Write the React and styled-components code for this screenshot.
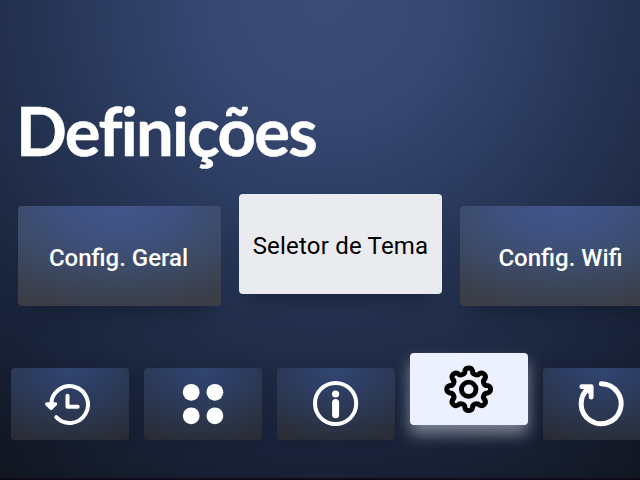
import React from "react";
import styled, { createGlobalStyle, css } from "styled-components";

const GlobalStyle = createGlobalStyle`
  * { box-sizing: border-box; }
  body { margin: 0; overflow: hidden; background: #10131f; }
`;

const Screen = styled.main`
  width: 640px;
  height: 480px;
  overflow: hidden;
  display: flex;
  flex-direction: column;
  border-bottom: 2px solid #0e0c1b;
  font-family: Roboto, sans-serif;
  background: radial-gradient(
    circle at 51% 0,
    #3a4b77 0,
    #374972 110px,
    #2f4067 190px,
    #273657 270px,
    #212d49 350px,
    #19233a 450px,
    #111621 570px
  );
`;

const Title = styled.h1`
  margin: 90px 0 0 16px;
  height: 80px;
  font: 700 67px/80px Lato, sans-serif;
  letter-spacing: -1.7px;
  -webkit-text-stroke: 0.5px #fff;
  color: #fff;
  white-space: nowrap;
`;

const CardRow = styled.section`
  display: flex;
  gap: 18px;
  margin: 36px 0 0 18px;
`;

const Card = styled.button`
  flex: 0 0 203px;
  height: 100px;
  padding: 4px 2px 0 0;
  border: 0;
  border-radius: 4px;
  display: flex;
  align-items: center;
  justify-content: center;
  font: 500 24px/30px Roboto, sans-serif;
  white-space: nowrap;
  color: #fff;
  background: radial-gradient(ellipse 92% 105% at 50% 0, #43558a 0, #3f5180 30%, #3c4b68 60%, #3b4457 80%, #3b3e47 100%);
  box-shadow: 0 18px 18px -12px rgba(16, 22, 35, 0.5);
  ${({ $active }) =>
    $active &&
    css`
      margin-top: -12px;
      margin-bottom: 12px;
      padding-right: 0;
      font-weight: 450;
      letter-spacing: 0.2px;
      color: #000;
      background: #e9ebef;
    `}
`;

const Dock = styled.nav`
  display: flex;
  gap: 15px;
  margin: 62px 0 0 11px;
`;

const DockButton = styled.button`
  flex: 0 0 118px;
  height: 72px;
  padding: 0;
  border: 0;
  border-radius: 4px;
  display: flex;
  align-items: center;
  justify-content: center;
  color: #fff;
  background: radial-gradient(ellipse 95% 110% at 50% 0, #314673 0, #2d3d61 34%, #2b364d 65%, #292c34 100%);
  box-shadow: 0 2px 12px rgba(16, 22, 35, 0.25);
  ${({ $active }) =>
    $active &&
    css`
      margin-top: -15px;
      margin-bottom: 15px;
      color: #000;
      background: #ebf1ff;
      box-shadow: 0 9px 15px rgba(235, 238, 245, 0.48);
    `}
`;

const Glyph = styled.svg`
  display: block;
  width: 60px;
  height: 60px;
  fill: none;
  stroke: currentColor;
  stroke-width: 4;
  stroke-linecap: round;
  stroke-linejoin: round;
`;

function gearOutline(teeth, radius, bend) {
  const step = Math.PI / teeth;
  const point = (i) => {
    const a = (i - 0.5) * step - Math.PI / 2;
    return `${(30 + radius * Math.cos(a)).toFixed(2)} ${(30 + radius * Math.sin(a)).toFixed(2)}`;
  };
  let d = `M${point(0)}`;
  for (let i = 1; i <= teeth * 2; i += 1) {
    d += `A${bend} ${bend} 0 0 ${i % 2} ${point(i)}`;
  }
  return `${d}Z`;
}

const HistoryIcon = () => (
  <Glyph viewBox="0 0 60 60">
    <path d="M11.2 30A18.4 18.4 0 1 1 16.2 43.2" />
    <path d="M6.8 30H15.4L11.1 34.2Z" fill="currentColor" strokeWidth="3.6" />
    <path d="M27.5 21.8V32.7H37.7" />
  </Glyph>
);

const AppsIcon = () => (
  <Glyph viewBox="0 0 60 60">
    <g fill="currentColor" stroke="none">
      <circle cx="18.2" cy="18.3" r="8.4" />
      <circle cx="41.9" cy="18.3" r="8.4" />
      <circle cx="18.2" cy="41.8" r="8.4" />
      <circle cx="41.9" cy="41.8" r="8.4" />
    </g>
  </Glyph>
);

const InfoIcon = () => (
  <Glyph viewBox="0 0 60 60">
    <circle cx="29.6" cy="29.5" r="20.6" />
    <circle cx="29.6" cy="20" r="3.6" fill="currentColor" stroke="none" />
    <path d="M29.6 28.4V40.8" strokeWidth="7" />
  </Glyph>
);

const GearIcon = () => (
  <Glyph viewBox="0 0 60 60">
    <g transform="translate(-0.3 1.1) scale(1 0.975)">
      <path d={gearOutline(8, 19.5, 4)} strokeWidth="5" />
      <circle cx="30" cy="30" r="7.3" strokeWidth="4.9" />
    </g>
  </Glyph>
);

const RestartIcon = () => (
  <Glyph viewBox="0 0 60 60">
    <path d="M29.4 9.7A20 20 0 1 1 16.5 14.2" strokeWidth="5" />
    <path d="M9.8 12.7H19.2V23.2" strokeWidth="4.8" />
    <path d="M12 13L19 21V13Z" fill="currentColor" strokeWidth="2" />
  </Glyph>
);

const cards = ["Config. Geral", "Seletor de Tema", "Config. Wifi"];
const dockItems = [
  ["Histórico", HistoryIcon],
  ["Aplicações", AppsIcon],
  ["Informação", InfoIcon],
  ["Definições", GearIcon],
  ["Reiniciar", RestartIcon],
];

export default function App() {
  return (
    <Screen>
      <GlobalStyle />
      <Title>Definições</Title>
      <CardRow>
        {cards.map((label, i) => (
          <Card key={label} $active={i === 1}>{label}</Card>
        ))}
      </CardRow>
      <Dock>
        {dockItems.map(([label, Icon], i) => (
          <DockButton key={label} aria-label={label} $active={i === 3}>
            <Icon />
          </DockButton>
        ))}
      </Dock>
    </Screen>
  );
}
